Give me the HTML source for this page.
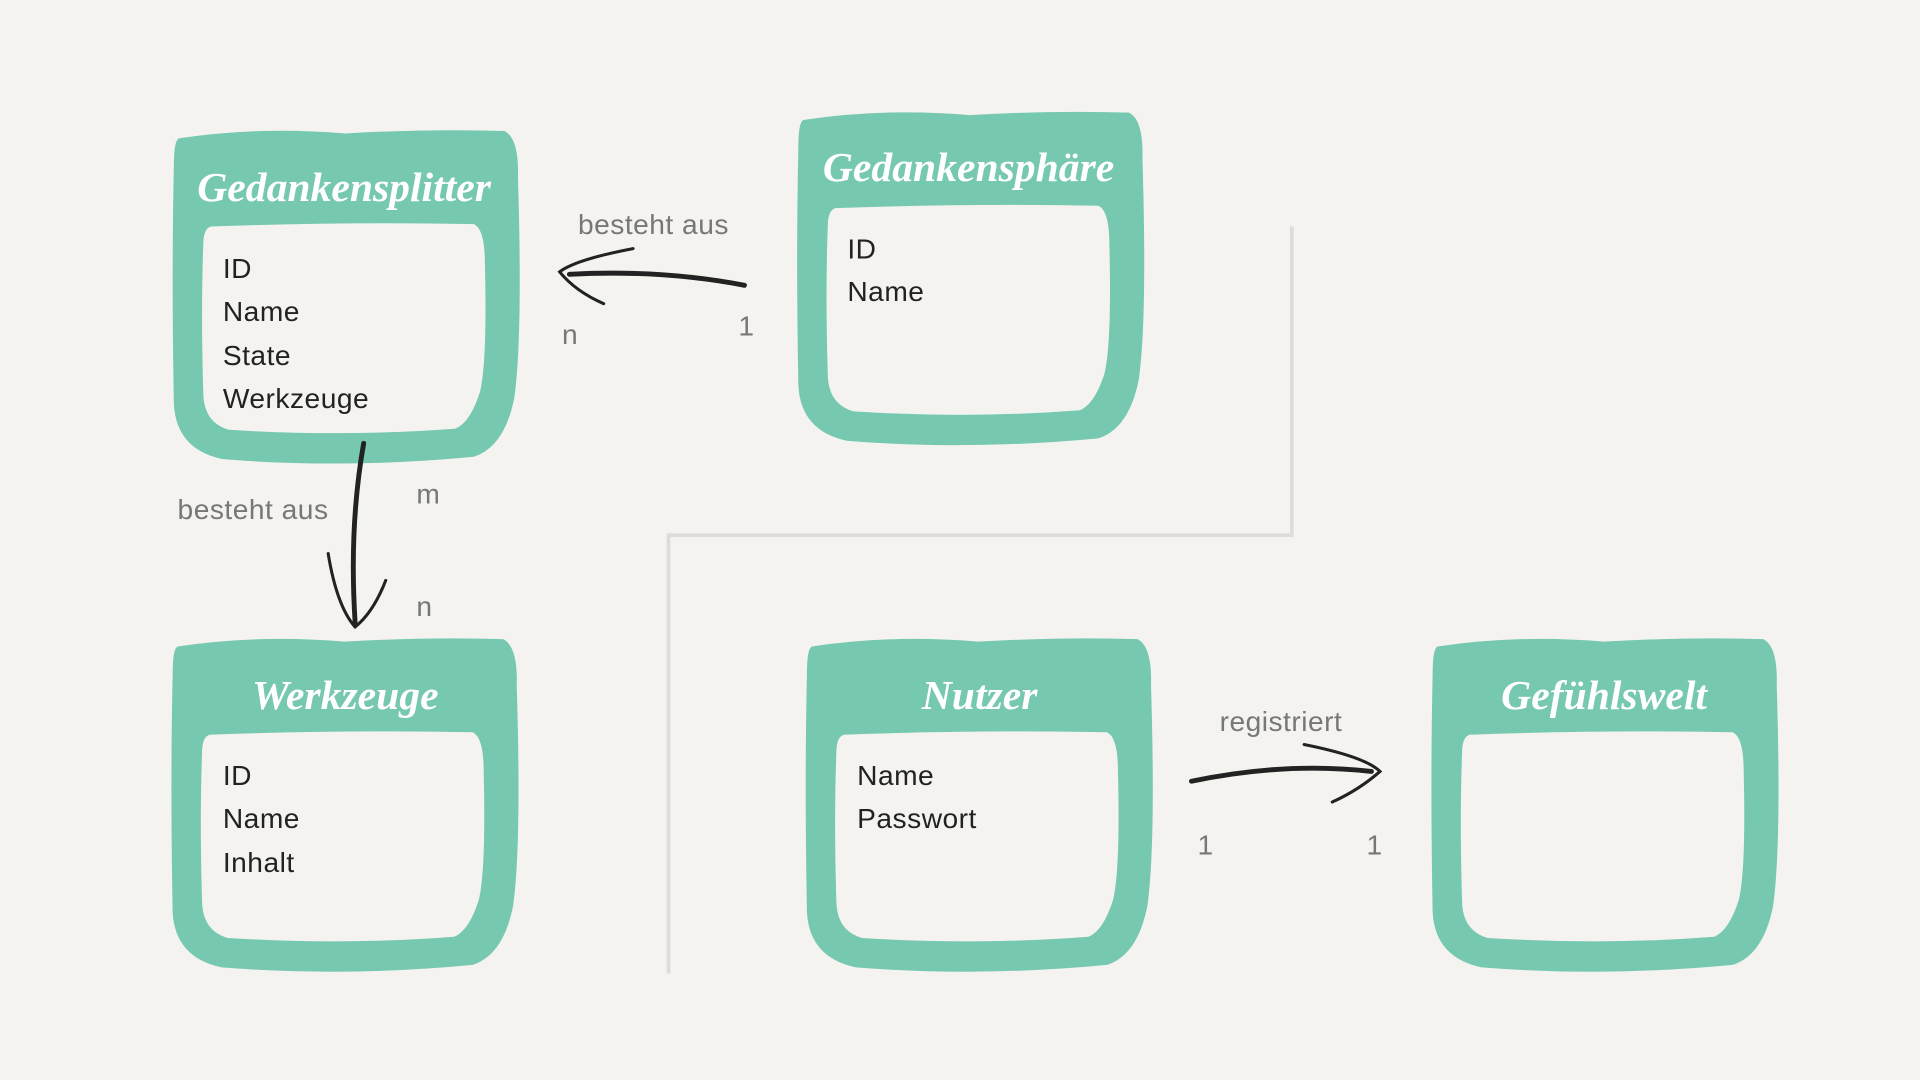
<!DOCTYPE html>
<html><head><meta charset="utf-8"><style>
html,body{margin:0;padding:0;background:#f4f3ef;}
svg{display:block}
.t{font-family:"Liberation Serif",serif;font-style:italic;font-weight:bold;fill:#fff;font-size:34px}
.f{font-family:"Liberation Sans",sans-serif;fill:#222;font-size:23px;letter-spacing:0.4px}
.l{font-family:"Liberation Sans",sans-serif;fill:#777;font-size:23px;letter-spacing:0.4px}
</style></head><body>
<svg width="1920" height="1080" viewBox="0 0 1568 882" xmlns="http://www.w3.org/2000/svg">
<rect width="1568" height="882" fill="#f4f3ef"/>
<polyline points="1055,185 1055,437 546,437 546,795" fill="none" stroke="#dddcd8" stroke-width="3"/>
<defs>
<g id="box">
<path d="M4,8 Q70,-2 140,4 Q210,0 270,2 Q282,8 281,40 Q285,170 278,220 Q270,260 245,268 Q140,278 40,270 Q2,262 0,225 Q-2,120 0,30 Q0,10 4,8Z" fill="#76c8b0"/>
<path d="M30,80 Q140,76 245,78 Q254,82 254,110 Q256,190 250,215 Q242,240 230,245 Q140,252 45,246 Q24,240 24,215 Q22,150 24,95 Q24,82 30,80Z" fill="#f4f3ef"/>
</g>
</defs>
<use href="#box" x="142" y="105"/>
<use href="#box" x="652" y="90"/>
<use href="#box" x="141" y="520"/>
<use href="#box" x="659" y="520"/>
<use href="#box" x="1170" y="520"/>
<text class="t" x="281" y="164" text-anchor="middle">Gedankensplitter</text>
<text class="t" x="791" y="148" text-anchor="middle">Gedankensphäre</text>
<text class="t" x="282" y="579" text-anchor="middle">Werkzeuge</text>
<text class="t" x="800" y="579" text-anchor="middle">Nutzer</text>
<text class="t" x="1310" y="579" text-anchor="middle">Gefühlswelt</text>
<g class="f">
<text x="182" y="227">ID</text><text x="182" y="262">Name</text><text x="182" y="298">State</text><text x="182" y="333">Werkzeuge</text>
<text x="692" y="211">ID</text><text x="692" y="246">Name</text>
<text x="182" y="641">ID</text><text x="182" y="676">Name</text><text x="182" y="712">Inhalt</text>
<text x="700" y="641">Name</text><text x="700" y="676">Passwort</text>
</g>
<g class="l">
<text x="472" y="191">besteht aus</text>
<text x="145" y="424">besteht aus</text>
<text x="996" y="597">registriert</text>
<text x="459" y="281">n</text><text x="603" y="274">1</text>
<text x="340" y="411">m</text><text x="340" y="503">n</text>
<text x="978" y="698">1</text><text x="1116" y="698">1</text>
</g>
<g fill="none" stroke="#222" stroke-linecap="round">
<path d="M608,233 Q540,220 465,224" stroke-width="4"/>
<path d="M517,203 Q470,212 457,222 Q470,238 493,248" stroke-width="2.5"/>
<path d="M297,362 Q285,430 290,508" stroke-width="4"/>
<path d="M268,452 Q275,495 290,512 Q305,500 315,474" stroke-width="2.5"/>
<path d="M973,638 Q1050,622 1120,630" stroke-width="4"/>
<path d="M1065,608 Q1115,618 1127,630 Q1110,645 1088,655" stroke-width="2.5"/>
</g>
</svg>
</body></html>
